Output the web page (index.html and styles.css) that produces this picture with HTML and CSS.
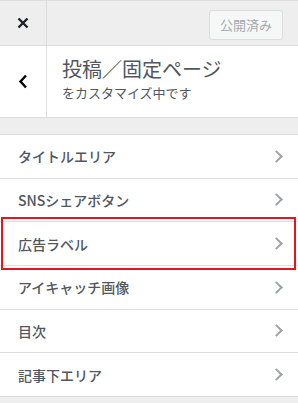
FILE: index.html
```html
<!DOCTYPE html>
<html lang="ja">
<head>
    <meta charset="UTF-8">
    <meta name="viewport" content="width=device-width, initial-scale=1.0">
    <title>カスタマイズ</title>
    <link rel="stylesheet" href="styles.css">
</head>
<body>
    <div class="topbar">
        <div class="close">
            <svg width="12" height="12" viewBox="0 0 12 12"><path d="M1.5 1.5 L10.5 10.5 M10.5 1.5 L1.5 10.5" stroke="#1d2327" stroke-width="2.4" fill="none"/></svg>
        </div>
        <div class="topbar-right">
            <button class="publish" disabled>公開済み</button>
        </div>
    </div>

    <div class="section-head">
        <div class="back">
            <svg width="10" height="15" viewBox="0 0 10 15"><path d="M8 1.5 L2.5 7.5 L8 13.5" stroke="#000" stroke-width="2.4" fill="none"/></svg>
        </div>
        <div class="section-title">
            <h2>投稿／固定ページ</h2>
            <p>をカスタマイズ中です</p>
        </div>
    </div>

    <ul class="menu">
        <li>タイトルエリア<span class="chev"></span></li>
        <li>SNSシェアボタン<span class="chev"></span></li>
        <li class="marked">広告ラベル<span class="chev"></span></li>
        <li>アイキャッチ画像<span class="chev"></span></li>
        <li>目次<span class="chev"></span></li>
        <li>記事下エリア<span class="chev"></span></li>
    </ul>
</body>
</html>
```

FILE: styles.css
```css
body {
    margin: 0;
    background-color: #eeeeee;
    font-family: "Noto Sans CJK JP", "Noto Sans", sans-serif;
    color: #50575e;
}

.topbar {
    display: flex;
    height: 44px;
    border-top: 1px solid #dddddd;
    border-bottom: 1px solid #dddddd;
    background-color: #eeeeee;
}

.close {
    width: 46px;
    border-right: 1px solid #dddddd;
    display: flex;
    align-items: center;
    justify-content: center;
}

.topbar-right {
    flex: 1;
    display: flex;
    align-items: center;
    justify-content: flex-end;
    padding-right: 15px;
}

.publish {
    width: 74px;
    height: 30px;
    margin-top: 3px;
    padding: 0;
    background-color: #f6f7f7;
    border: 1px solid #dcdcde;
    border-radius: 3px;
    color: #a7aaad;
    font-family: inherit;
    font-size: 13px;
}

.section-head {
    display: flex;
    height: 71px;
    background-color: #fff;
    border-bottom: 1px solid #dddddd;
}

.back {
    width: 46px;
    border-right: 1px solid #dddddd;
    display: flex;
    align-items: center;
    justify-content: center;
}

.section-title {
    padding: 9px 0 0 15px;
}

.section-title h2 {
    margin: 0;
    font-size: 20px;
    font-weight: normal;
    line-height: 28px;
    color: #50575e;
}

.section-title p {
    margin: 0;
    font-size: 13px;
    line-height: 20px;
    color: #50575e;
}

.menu {
    list-style: none;
    margin: 16px 0 0;
    padding: 0;
    border-top: 1px solid #dddddd;
}

.menu li {
    position: relative;
    display: flex;
    align-items: center;
    justify-content: space-between;
    height: 42.67px;
    padding: 0 17px 0 18px;
    background-color: #fff;
    border-bottom: 1px solid #dddddd;
    font-size: 14px;
    font-weight: 500;
}

.chev {
    width: 7px;
    height: 7px;
    border-top: 2px solid #9ea3a8;
    border-right: 2px solid #9ea3a8;
    transform: rotate(45deg);
}

.menu li.marked {
    z-index: 1;
}

.menu li.marked::after {
    content: "";
    position: absolute;
    left: 1px;
    right: 2px;
    top: -5px;
    bottom: -5px;
    border: 2px solid #e6141e;
}
```
